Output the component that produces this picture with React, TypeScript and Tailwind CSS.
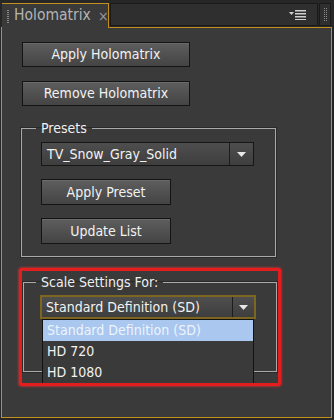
import React from "react";

const font = { fontFamily: '"DejaVu Sans Condensed", "DejaVu Sans", Tahoma, sans-serif' };

function Btn({ label, w, h, className = "" }: { label: string; w: string; h: string; className?: string }) {
  return (
    <div
      className={`${w} ${h} ${className} flex items-center justify-center border border-[#141414] bg-gradient-to-b from-[#5e5e5e] to-[#444444] text-[14px] text-[#f2f2f2] shadow-[inset_0_1px_0_#6a6a6a]`}
    >
      {label}
    </div>
  );
}

function Arrow() {
  return (
    <svg width="9" height="5" viewBox="0 0 9 5">
      <path d="M0 0 H9 L4.5 5 Z" fill="#e8e8e8" />
    </svg>
  );
}

function Gripper() {
  return (
    <div className="grid grid-cols-2 gap-x-[1px] gap-y-[1px]">
      {Array.from({ length: 14 }).map((_, i) => (
        <div key={i} className="w-[1px] h-[1px] bg-[#8a8a8a]" />
      ))}
    </div>
  );
}

export default function App() {
  return (
    <div className="relative w-[334px] h-[420px] bg-[#272727] flex flex-col" style={font}>
      {/* tab row */}
      <div className="flex items-end h-[27px] pt-[3px]">
        <div className="relative z-10 ml-[2px] w-[107px] h-[25px] -mb-[1px] bg-[#3a3a3a] border-t border-r border-[#c3901e] flex items-center pl-[5px]">
          <Gripper />
          <span className="ml-[6px] text-[15.5px] text-[#b4b4b4] leading-none">Holomatrix</span>
          <span className="ml-[7px] text-[14px] text-[#9a9a9a] leading-none">×</span>
        </div>
        <div className="ml-[1px] w-[208px] h-[23px] mb-[1px] bg-[#2f2f2f] border border-[#1a1a1a] flex items-center justify-end pr-[10px]">
          <svg width="18" height="10" viewBox="0 0 18 10">
            <path d="M0 2 H5 L2.5 5 Z" fill="#d0d0d0" />
            <rect x="6" y="0" width="11" height="1.5" fill="#d0d0d0" />
            <rect x="6" y="3" width="11" height="1.5" fill="#d0d0d0" />
            <rect x="6" y="6" width="11" height="1.5" fill="#d0d0d0" />
            <rect x="6" y="9" width="11" height="1" fill="#d0d0d0" />
          </svg>
        </div>
        <div className="ml-[1px] w-[12px] h-[23px] mb-[1px] bg-[#2f2f2f] border border-[#1a1a1a] flex items-center justify-center">
          <Gripper />
        </div>
      </div>

      {/* panel */}
      <div className="ml-[1px] w-[331px] h-[391px] bg-[#3a3a3a] border border-[#c3901e] flex flex-col pt-[14px]">
        <Btn label="Apply Holomatrix" w="w-[168px]" h="h-[25px]" className="ml-[20px]" />
        <Btn label="Remove Holomatrix" w="w-[168px]" h="h-[25px]" className="ml-[20px] mt-[14px]" />

        <fieldset className="ml-[19px] mt-[14px] w-[255px] border border-[#a9a9a9] pl-[19px] pb-[12px] shadow-[0_0_0_1px_#2a2a2a]">
          <legend className="ml-[-5px] px-[5px] text-[14px] leading-[16px] text-[#f0f0f0]">Presets</legend>
          <div className="mt-[6px] w-[213px] h-[24px] flex border border-[#161616] bg-gradient-to-b from-[#4e4e4e] to-[#3e3e3e]">
            <div className="flex-1 flex items-center pl-[5px] text-[14px] text-[#f2f2f2]">TV_Snow_Gray_Solid</div>
            <div className="w-[24px] border-l border-[#1c1c1c] flex items-center justify-center">
              <Arrow />
            </div>
          </div>
          <Btn label="Apply Preset" w="w-[130px]" h="h-[26px]" className="mt-[13px]" />
          <Btn label="Update List" w="w-[130px]" h="h-[26px]" className="mt-[13px]" />
        </fieldset>

        <fieldset className="ml-[21px] mt-[17px] w-[254px] border border-[#a9a9a9] pl-[16px] pb-[52px] shadow-[0_0_0_1px_#2a2a2a]">
          <legend className="ml-[-4px] px-[5px] text-[14px] leading-[16px] text-[#f0f0f0]">Scale Settings For:</legend>
          <div className="relative mt-[5px] w-[216px] h-[24px] flex border-2 border-[#7d6620] bg-gradient-to-b from-[#4e4e4e] to-[#3e3e3e]">
            <div className="flex-1 flex items-center pl-[4px] text-[14px] text-[#f2f2f2]">Standard Definition (SD)</div>
            <div className="w-[22px] border-l border-[#1c1c1c] flex items-center justify-center">
              <Arrow />
            </div>
            <div className="absolute z-10 top-[22px] left-0 w-[212px] bg-[#3a3a3a] border border-[#121212] flex flex-col text-[14px]">
              <div className="h-[21px] flex items-center pl-[4px] bg-[#a9c7ef] text-[#eef4fc]">Standard Definition (SD)</div>
              <div className="h-[21px] flex items-center pl-[4px] text-[#f2f2f2]">HD 720</div>
              <div className="h-[21px] flex items-center pl-[4px] text-[#f2f2f2]">HD 1080</div>
            </div>
          </div>
        </fieldset>
      </div>

      {/* red annotation box */}
      <div className="absolute left-[19px] top-[268px] w-[262px] h-[118px] border-[3px] border-[#e41e1e] rounded-[2px] shadow-[0_0_3px_#ff3030] pointer-events-none z-20" />
    </div>
  );
}
